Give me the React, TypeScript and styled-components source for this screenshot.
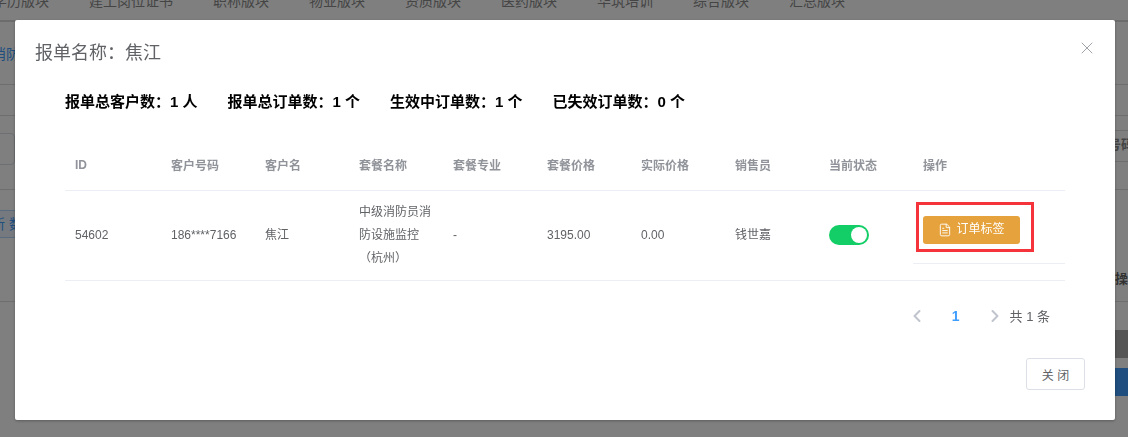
import styled, { createGlobalStyle } from "styled-components";
import { FileText, X, ChevronLeft, ChevronRight } from "lucide-react";

const GlobalStyle = createGlobalStyle`
    html, body {
        margin: 0;
        padding: 0;
        overflow: hidden;
        background: #fff;
        font-family: "Liberation Sans", "Noto Sans CJK SC", sans-serif;
    }
`;

const Page = styled.div`
    width: 1128px;
    height: 437px;
    overflow: hidden;
`;

const Nav = styled.div`
    display: flex;
    gap: 40px;
    box-sizing: border-box;
    height: 22px;
    font-size: 14px;
    line-height: 16px;
    color: #8a8a8a;
    border-bottom: 2px solid #d8d8d8;
    overflow: hidden;

    span {
        flex: none;
        margin-top: -7px;
    }
    span:first-child {
        margin-left: -7px;
    }
`;

const Band = styled.div<{ $h: number }>`
    display: flex;
    justify-content: space-between;
    box-sizing: border-box;
    height: ${(p) => p.$h}px;
    border-bottom: 1px solid #ddd;
`;

const LeftSlot = styled.div`
    width: 15px;
    display: flex;
    justify-content: flex-end;
`;

const RightSlot = styled.div`
    width: 30px;
    display: flex;
    flex-direction: column;
    font-size: 13px;
    color: #888;
`;

const BlueText = styled.span`
    flex: none;
    margin: 23px -5px 0 0;
    font-size: 14px;
    line-height: 18px;
    color: #409eff;
`;

const SelectBox = styled.div`
    flex: none;
    box-sizing: border-box;
    width: 40px;
    height: 32px;
    margin-top: 17px;
    border: 1px solid #dcdfe6;
    border-radius: 4px;
`;

const BlueButton = styled.div`
    flex: none;
    box-sizing: border-box;
    width: 70px;
    height: 28px;
    margin: 20px -25px 0 0;
    padding-left: 20px;
    border: 1px solid #b3d8ff;
    border-radius: 3px;
    background: #ecf5ff;
    font-size: 14px;
    line-height: 26px;
    color: #409eff;
    white-space: nowrap;
`;

const HeadLines = styled.div`
    box-sizing: border-box;
    height: 32px;
    margin: 14px 0 0;
    padding-left: 10px;
    border-top: 1px solid #ddd;
    border-bottom: 1px solid #ddd;
    line-height: 28px;
    white-space: nowrap;
    font-weight: 700;
`;

const RightCellText = styled.div`
    margin: 78px 0 0 17px;
    font-size: 13px;
    font-weight: 700;
    color: #666;
    white-space: nowrap;
`;

const RightBottom = styled.div`
    width: 30px;
    margin-left: auto;
`;

const FooterBlock = styled.div<{ $color: string; $gap: number }>`
    height: 28px;
    margin-top: ${(p) => p.$gap}px;
    background: ${(p) => p.$color};
`;

const Overlay = styled.div`
    position: fixed;
    inset: 0;
    background: rgba(0, 0, 0, 0.5);
`;

const Modal = styled.div`
    position: fixed;
    left: 15px;
    top: 20px;
    width: 1100px;
    height: 400px;
    box-sizing: border-box;
    background: #fff;
    border-radius: 2px;
    box-shadow: 0 1px 3px rgba(0, 0, 0, 0.3);
    padding: 21px 50px 0 50px;
`;

const Title = styled.div`
    margin-left: -30px;
    font-size: 18px;
    line-height: 24px;
    color: #606266;
`;

const CloseBtn = styled.button`
    position: absolute;
    right: 18px;
    top: 18px;
    padding: 0;
    border: 0;
    background: none;
    color: #a0a3aa;
    display: flex;
`;

const Stats = styled.div`
    display: flex;
    gap: 30px;
    margin-top: 27px;
    font-size: 15px;
    line-height: 20px;
    font-weight: 700;
    color: #000;
`;

const Table = styled.table`
    border-collapse: collapse;
    table-layout: fixed;
    width: 1000px;
    margin-top: 28px;
    font-size: 12px;
    color: #606266;
`;

const Th = styled.th`
    height: 50px;
    box-sizing: border-box;
    padding: 0 10px;
    text-align: left;
    font-weight: 700;
    color: #909399;
    border-bottom: 1px solid #ebeef5;
`;

const Td = styled.td`
    height: 89px;
    padding: 0 10px;
    line-height: 23px;
    border-bottom: 1px solid #ebeef5;
`;

const ActionTd = styled(Td)`
    vertical-align: top;
`;

const ToggleTrack = styled.span`
    display: block;
    position: relative;
    width: 40px;
    height: 20px;
    border-radius: 10px;
    background: #13ce66;
`;

const ToggleKnob = styled.span`
    position: absolute;
    right: 2px;
    top: 2px;
    width: 16px;
    height: 16px;
    border-radius: 50%;
    background: #fff;
`;

const ActionCell = styled.div`
    position: relative;
    box-sizing: border-box;
    height: 73px;
    margin: 0 -10px;
    padding: 25px 10px 0;
    border-bottom: 1px solid #ebeef5;
`;

const TagButton = styled.button`
    display: flex;
    align-items: center;
    justify-content: center;
    gap: 4px;
    width: 97px;
    height: 28px;
    padding: 0;
    border: 0;
    border-radius: 3px;
    background: #e6a23c;
    color: #fff;
    font: inherit;
`;

const Highlight = styled.div`
    position: absolute;
    left: 3px;
    top: 11px;
    width: 118px;
    height: 50px;
    border: 3px solid #f5333a;
    box-sizing: border-box;
    pointer-events: none;
`;

const Pager = styled.div`
    display: flex;
    align-items: center;
    justify-content: flex-end;
    height: 30px;
    margin-top: 20px;
    padding-right: 15px;
    font-size: 13px;
    color: #606266;
`;

const PageArrow = styled.span`
    display: flex;
    justify-content: center;
    width: 30px;
    color: #c0c4cc;
`;

const PageNum = styled.span`
    width: 48px;
    text-align: center;
    font-size: 14px;
    font-weight: 700;
    color: #409eff;
`;

const Footer = styled.div`
    position: absolute;
    right: 30px;
    bottom: 30px;
`;

const CloseButton = styled.button`
    width: 59px;
    height: 32px;
    border: 1px solid #dcdfe6;
    border-radius: 3px;
    background: #fff;
    color: #606266;
    font: inherit;
    font-size: 12px;
`;

const columns = [
    { name: "ID", w: 96 },
    { name: "客户号码", w: 94 },
    { name: "客户名", w: 94 },
    { name: "套餐名称", w: 94 },
    { name: "套餐专业", w: 94 },
    { name: "套餐价格", w: 94 },
    { name: "实际价格", w: 94 },
    { name: "销售员", w: 94 },
    { name: "当前状态", w: 94 },
    { name: "操作", w: 152 },
];

const navItems = ["学历版块", "建工岗位证书", "职称版块", "物业版块", "资质版块", "医药版块", "华筑培训", "综合版块", "汇总版块"];

function App() {
    return (
        <Page>
            <GlobalStyle />
            <Nav>
                {navItems.map((item) => <span key={item}>{item}</span>)}
            </Nav>
            {/* what shows of the page behind the dialog, at its left and right edges */}
            <Band $h={63}>
                <LeftSlot><BlueText>消防</BlueText></LeftSlot>
            </Band>
            <Band $h={31} />
            <Band $h={74}>
                <LeftSlot><SelectBox /></LeftSlot>
                <RightSlot><HeadLines>号码</HeadLines></RightSlot>
            </Band>
            <Band $h={112}>
                <LeftSlot><BlueButton>新 数据</BlueButton></LeftSlot>
                <RightSlot><RightCellText>操作</RightCellText></RightSlot>
            </Band>
            <RightBottom>
                <FooterBlock $color="#aaa" $gap={28} />
                <FooterBlock $color="#409eff" $gap={10} />
            </RightBottom>
            <Overlay />
            <Modal>
                <Title>报单名称：焦江</Title>
                <CloseBtn><X size={20} strokeWidth={1.2} /></CloseBtn>
                <Stats>
                    <span>报单总客户数：1 人</span>
                    <span>报单总订单数：1 个</span>
                    <span>生效中订单数：1 个</span>
                    <span>已失效订单数：0 个</span>
                </Stats>
                <Table>
                    <colgroup>
                        {columns.map((c) => <col key={c.name} width={c.w} />)}
                    </colgroup>
                    <thead>
                        <tr>{columns.map((c) => <Th key={c.name}>{c.name}</Th>)}</tr>
                    </thead>
                    <tbody>
                        <tr>
                            <Td>54602</Td>
                            <Td>186****7166</Td>
                            <Td>焦江</Td>
                            <Td>中级消防员消防设施监控（杭州）</Td>
                            <Td>-</Td>
                            <Td>3195.00</Td>
                            <Td>0.00</Td>
                            <Td>钱世嘉</Td>
                            <Td><ToggleTrack><ToggleKnob /></ToggleTrack></Td>
                            <ActionTd>
                                <ActionCell>
                                    <TagButton><FileText size={14} strokeWidth={1.6} />订单标签</TagButton>
                                    <Highlight />
                                </ActionCell>
                            </ActionTd>
                        </tr>
                    </tbody>
                </Table>
                <Pager>
                    <PageArrow><ChevronLeft size={20} strokeWidth={2.4} /></PageArrow>
                    <PageNum>1</PageNum>
                    <PageArrow><ChevronRight size={20} strokeWidth={2.4} /></PageArrow>
                    <span>共 1 条</span>
                </Pager>
                <Footer><CloseButton>关 闭</CloseButton></Footer>
            </Modal>
        </Page>
    );
}

export default App;
